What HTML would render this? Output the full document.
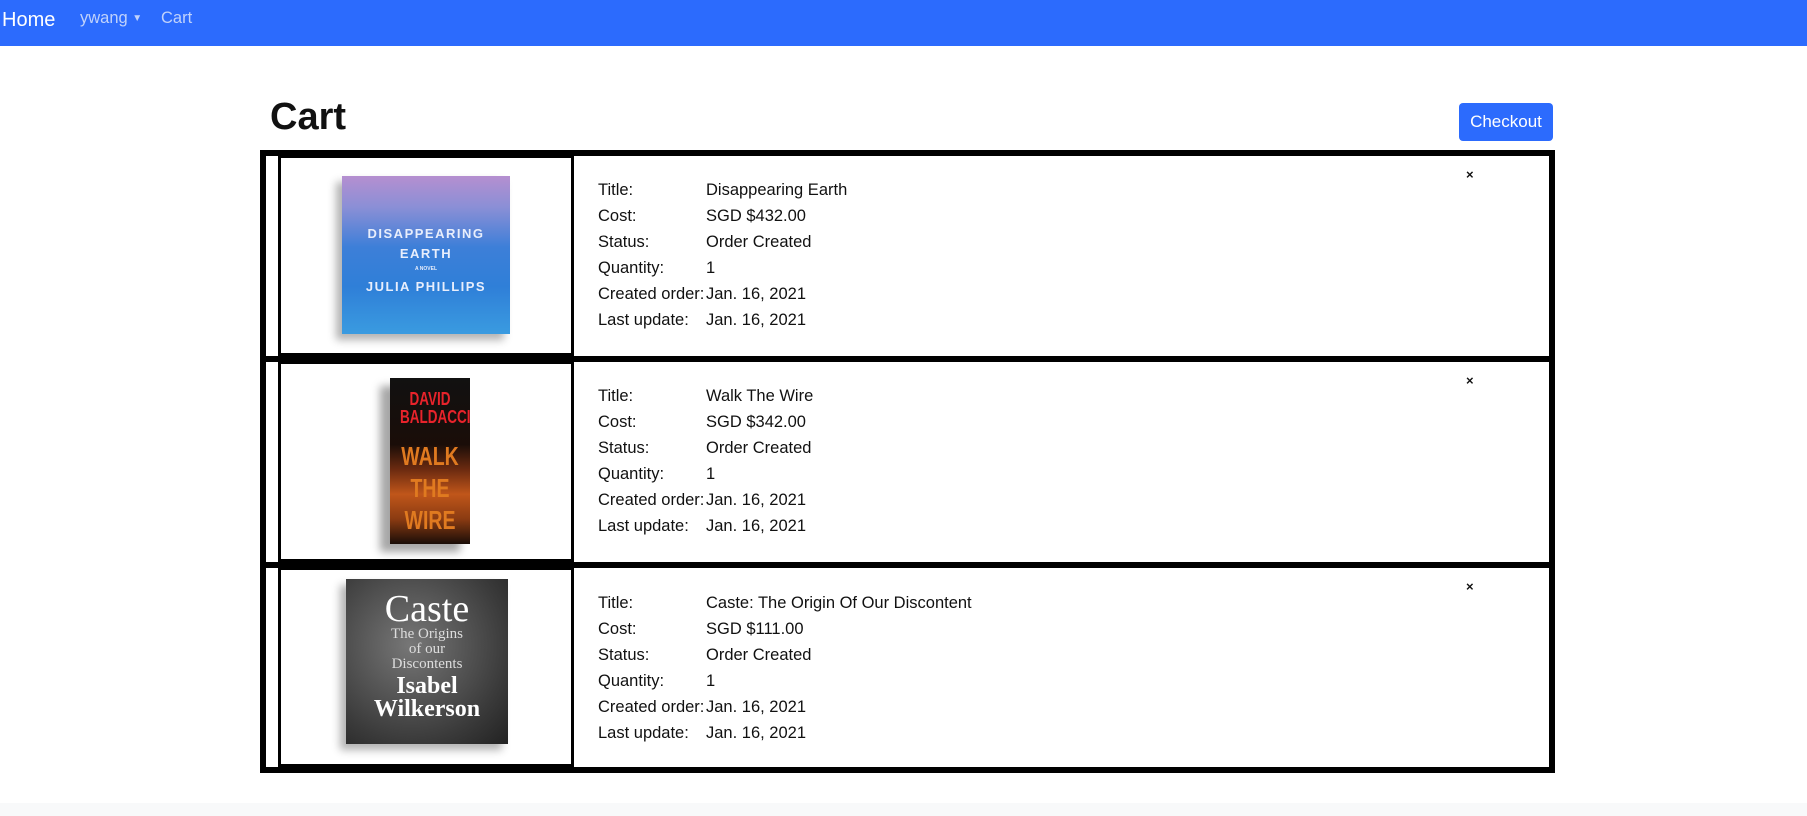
<!DOCTYPE html>
<html><head><meta charset="utf-8"><style>
*{margin:0;padding:0;box-sizing:border-box}
body{width:1807px;height:816px;background:#fff;font-family:"Liberation Sans",sans-serif;position:relative;overflow:hidden;color:#111}
.a{position:absolute}
.nav{left:0;top:0;width:1807px;height:46px;background:#2c6bfd}
.bk{background:#000}
.lbl{position:absolute;font-size:16.5px;line-height:26px}
.x{position:absolute;font-size:13px;font-weight:bold}
.cover{position:absolute;overflow:hidden;box-shadow:-6px 6px 8px rgba(0,0,0,.3);text-align:center;font-family:"Liberation Serif",serif}
</style></head><body>
<div class="a nav"></div>
<div class="a" style="left:2px;top:9px;font-size:20px;color:#fff">Home</div>
<div class="a" style="left:80px;top:9px;font-size:16.5px;color:#c0d2fb">ywang <span style="font-size:10px;vertical-align:2px">▼</span></div>
<div class="a" style="left:161px;top:9px;font-size:16.5px;color:#c0d2fb">Cart</div>
<div class="a" style="left:270px;top:96px;font-size:38px;font-weight:bold">Cart</div>
<div class="a" style="left:1459px;top:103px;width:94px;height:38px;background:#2c6bfd;border-radius:4px;color:#fff;font-size:17px;text-align:center;line-height:38px">Checkout</div>

<!-- table frame -->
<div class="a bk" style="left:260px;top:150px;width:1295px;height:6px"></div>
<div class="a bk" style="left:260px;top:150px;width:6px;height:623px"></div>
<div class="a bk" style="left:1549px;top:150px;width:6px;height:623px"></div>
<div class="a bk" style="left:260px;top:767px;width:1295px;height:6px"></div>
<div class="a bk" style="left:260px;top:356px;width:1295px;height:6px"></div>
<div class="a bk" style="left:260px;top:562px;width:1295px;height:6px"></div>
<!-- image cells -->
<div class="a" style="left:278px;top:155px;width:296px;height:201px;border:3px solid #000"></div>
<div class="a" style="left:278px;top:361px;width:296px;height:201px;border:3px solid #000"></div>
<div class="a" style="left:278px;top:567px;width:296px;height:200px;border:3px solid #000"></div>

<!-- covers -->
<div class="cover" style="left:342px;top:176px;width:168px;height:158px;background:linear-gradient(#b58fd0 0%,#8a8fd6 20%,#3d7fd8 45%,#2f7fd8 70%,#3a9be0 100%);color:#e8eefc;font-family:'Liberation Sans',sans-serif;font-weight:bold">
<div style="margin-top:50px;font-size:13px;letter-spacing:1.5px">DISAPPEARING</div>
<div style="font-size:13px;letter-spacing:1.5px;margin-top:5px">EARTH</div>
<div style="font-size:5px;margin-top:5px">A NOVEL</div>
<div style="font-size:13px;letter-spacing:1.5px;margin-top:7px">JULIA PHILLIPS</div></div>
<div class="cover" style="left:390px;top:378px;width:80px;height:166px;background:linear-gradient(#111 0%,#1a0d08 40%,#6b2a10 55%,#c0561a 70%,#8a3b12 85%,#1a0d08 100%);box-shadow:-10px 8px 8px rgba(0,0,0,.35);font-family:'Liberation Sans Narrow','Liberation Sans',sans-serif;font-weight:bold">
<div style="color:#e8232b;font-size:18px;line-height:18px;margin-top:12px;transform:scaleX(.75)">DAVID<br>BALDACCI</div>
<div style="color:#e07a20;font-size:26px;line-height:32px;margin-top:14px;transform:scaleX(.75)">WALK THE<br>WIRE</div></div>
<div class="cover" style="left:346px;top:579px;width:162px;height:165px;background:radial-gradient(circle at 40% 40%,#777,#3a3a3a 70%,#222);color:#fff">
<div style="font-size:38px;line-height:36px;margin-top:12px">Caste</div>
<div style="font-size:15px;line-height:15px;color:#ddd">The Origins<br>of our<br>Discontents</div>
<div style="font-size:24px;line-height:23px;margin-top:3px;font-weight:bold">Isabel<br>Wilkerson</div></div>

<!-- row text -->
<div class="lbl" style="left:598px;top:177px">Title:<br>Cost:<br>Status:<br>Quantity:<br>Created order:<br>Last update:</div>
<div class="lbl" style="left:706px;top:177px">Disappearing Earth<br>SGD $432.00<br>Order Created<br>1<br>Jan. 16, 2021<br>Jan. 16, 2021</div>
<div class="lbl" style="left:598px;top:383px">Title:<br>Cost:<br>Status:<br>Quantity:<br>Created order:<br>Last update:</div>
<div class="lbl" style="left:706px;top:383px">Walk The Wire<br>SGD $342.00<br>Order Created<br>1<br>Jan. 16, 2021<br>Jan. 16, 2021</div>
<div class="lbl" style="left:598px;top:590px">Title:<br>Cost:<br>Status:<br>Quantity:<br>Created order:<br>Last update:</div>
<div class="lbl" style="left:706px;top:590px">Caste: The Origin Of Our Discontent<br>SGD $111.00<br>Order Created<br>1<br>Jan. 16, 2021<br>Jan. 16, 2021</div>
<div class="x" style="left:1466px;top:167px">×</div>
<div class="x" style="left:1466px;top:373px">×</div>
<div class="x" style="left:1466px;top:579px">×</div>

<div class="a" style="left:0;top:803px;width:1807px;height:13px;background:#f8f9fa"></div>
</body></html>
